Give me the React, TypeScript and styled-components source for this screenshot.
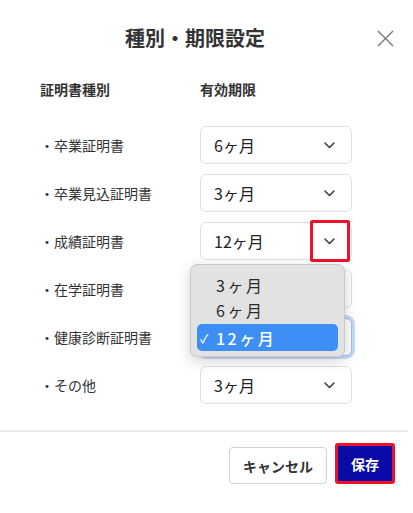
import styled, { createGlobalStyle } from "styled-components";

const GlobalStyle = createGlobalStyle`
  body {
    margin: 0;
    background: #fff;
    font-family: "Noto Sans CJK JP", "Noto Sans", sans-serif;
    color: #333;
  }
`;

type Row = { label: string; value: string; open?: boolean; focused?: boolean };

const rows: Row[] = [
  { label: "卒業証明書", value: "6ヶ月" },
  { label: "卒業見込証明書", value: "3ヶ月" },
  { label: "成績証明書", value: "12ヶ月", open: true },
  { label: "在学証明書", value: "" },
  { label: "健康診断証明書", value: "", focused: true },
  { label: "その他", value: "3ヶ月" },
];

const options = ["3ヶ月", "6ヶ月", "12ヶ月"];

const Chevron = () => (
  <svg width="11" height="7" viewBox="0 0 11 7" fill="none">
    <path d="M1 1l4.5 4.5L10 1" stroke="#444" strokeWidth="1.6" strokeLinecap="round" strokeLinejoin="round" />
  </svg>
);

export default function App() {
  return (
    <Dialog>
      <GlobalStyle />
      <Header>
        <Title>種別・期限設定</Title>
        <CloseButton aria-label="close">
          <svg width="17" height="17" viewBox="0 0 17 17">
            <path d="M1 1l15 15M16 1L1 16" stroke="#777" strokeWidth="1.4" />
          </svg>
        </CloseButton>
      </Header>

      <Table>
        <HeadCell>証明書種別</HeadCell>
        <HeadCell>有効期限</HeadCell>
        {rows.map((row) => (
          <RowFragment key={row.label} row={row} />
        ))}
      </Table>

      <Footer>
        <CancelButton>キャンセル</CancelButton>
        <SaveButton>保存</SaveButton>
      </Footer>
    </Dialog>
  );
}

const RowFragment = ({ row }: { row: Row }) => (
  <>
    <Label>・{row.label}</Label>
    <SelectWrap>
      <SelectBox $focused={row.focused}>
        <span>{row.value}</span>
        <Chevron />
      </SelectBox>
      {row.open && (
        <>
          <Marker />
          <Popup>
            {options.map((o) => (
              <Option key={o} $selected={o === row.value}>
                <Check>{o === row.value ? "✓" : ""}</Check>
                {o}
              </Option>
            ))}
          </Popup>
        </>
      )}
    </SelectWrap>
  </>
);

const Dialog = styled.div`
  width: 408px;
  min-height: 513px;
  background: #fff;
  display: flex;
  flex-direction: column;
`;

const Header = styled.div`
  height: 76px;
  display: flex;
  align-items: center;
  padding: 0 14px 0 125px;
`;

const Title = styled.h1`
  margin: 0;
  font-size: 20px;
  font-weight: 700;
  color: #333;
  line-height: 1;
`;

const CloseButton = styled.button`
  margin-left: auto;
  border: none;
  background: none;
  padding: 0;
  display: flex;
`;

const Table = styled.div`
  display: grid;
  grid-template-columns: 160px 152px;
  grid-auto-rows: 38px;
  row-gap: 10px;
  padding: 0 0 0 40px;
  margin-top: 2px;
`;

const HeadCell = styled.div`
  font-size: 14px;
  font-weight: 700;
  color: #333;
  display: flex;
  align-items: center;
  height: 22px;
  align-self: start;
`;

const Label = styled.div`
  font-size: 14px;
  color: #333;
  display: flex;
  align-items: center;
`;

const SelectWrap = styled.div`
  position: relative;
`;

const SelectBox = styled.div<{ $focused?: boolean }>`
  height: 100%;
  box-sizing: border-box;
  border: 1px solid ${(p) => (p.$focused ? "#9cc0ee" : "#dde1e6")};
  border-radius: 6px;
  background: #fff;
  display: flex;
  align-items: center;
  justify-content: space-between;
  padding: 0 16px 0 13px;
  font-size: 16px;
  color: #222;
  box-shadow: ${(p) => (p.$focused ? "0 0 0 3px rgba(90, 150, 235, 0.35)" : "none")};
`;

const Marker = styled.div`
  position: absolute;
  left: 110px;
  top: -2px;
  width: 40px;
  height: 42px;
  box-sizing: border-box;
  border: 3px solid #f0102a;
  border-radius: 2px;
`;

const Popup = styled.div`
  position: absolute;
  left: -10px;
  top: 42px;
  width: 155px;
  height: 93px;
  box-sizing: border-box;
  padding: 7px 6px 0;
  background: #e2e2e3;
  border: 1px solid #c9c9cb;
  border-radius: 7px;
  box-shadow: 0 4px 14px rgba(0, 0, 0, 0.18);
  z-index: 5;
`;

const Option = styled.div<{ $selected?: boolean }>`
  height: ${(p) => (p.$selected ? "27px" : "25px")};
  margin-top: ${(p) => (p.$selected ? "2px" : "0")};
  display: flex;
  align-items: center;
  border-radius: 5px;
  font-size: 16px;
  letter-spacing: 2.5px;
  background: ${(p) => (p.$selected ? "#3e8ff5" : "transparent")};
  color: ${(p) => (p.$selected ? "#fff" : "#2a2a2a")};
  font-weight: ${(p) => (p.$selected ? 500 : 400)};
`;

const Check = styled.span`
  width: 16px;
  padding-left: 3px;
  font-size: 12px;
  letter-spacing: 0;
`;

const Footer = styled.div`
  margin-top: 26px;
  border-top: 2px solid #e6e9ed;
  display: flex;
  justify-content: flex-end;
  align-items: flex-end;
  gap: 8px;
  padding: 11px 13px 0 0;
`;

const CancelButton = styled.button`
  width: 98px;
  height: 37px;
  border: 1px solid #cfd3d8;
  border-radius: 4px;
  background: #fff;
  font-family: inherit;
  font-size: 14px;
  font-weight: 700;
  color: #333;
`;

const SaveButton = styled.button`
  width: 60px;
  height: 41px;
  border: 3px solid #f0102a;
  border-radius: 3px;
  background: #0a0aa6;
  font-family: inherit;
  font-size: 14px;
  font-weight: 700;
  color: #fff;
`;
